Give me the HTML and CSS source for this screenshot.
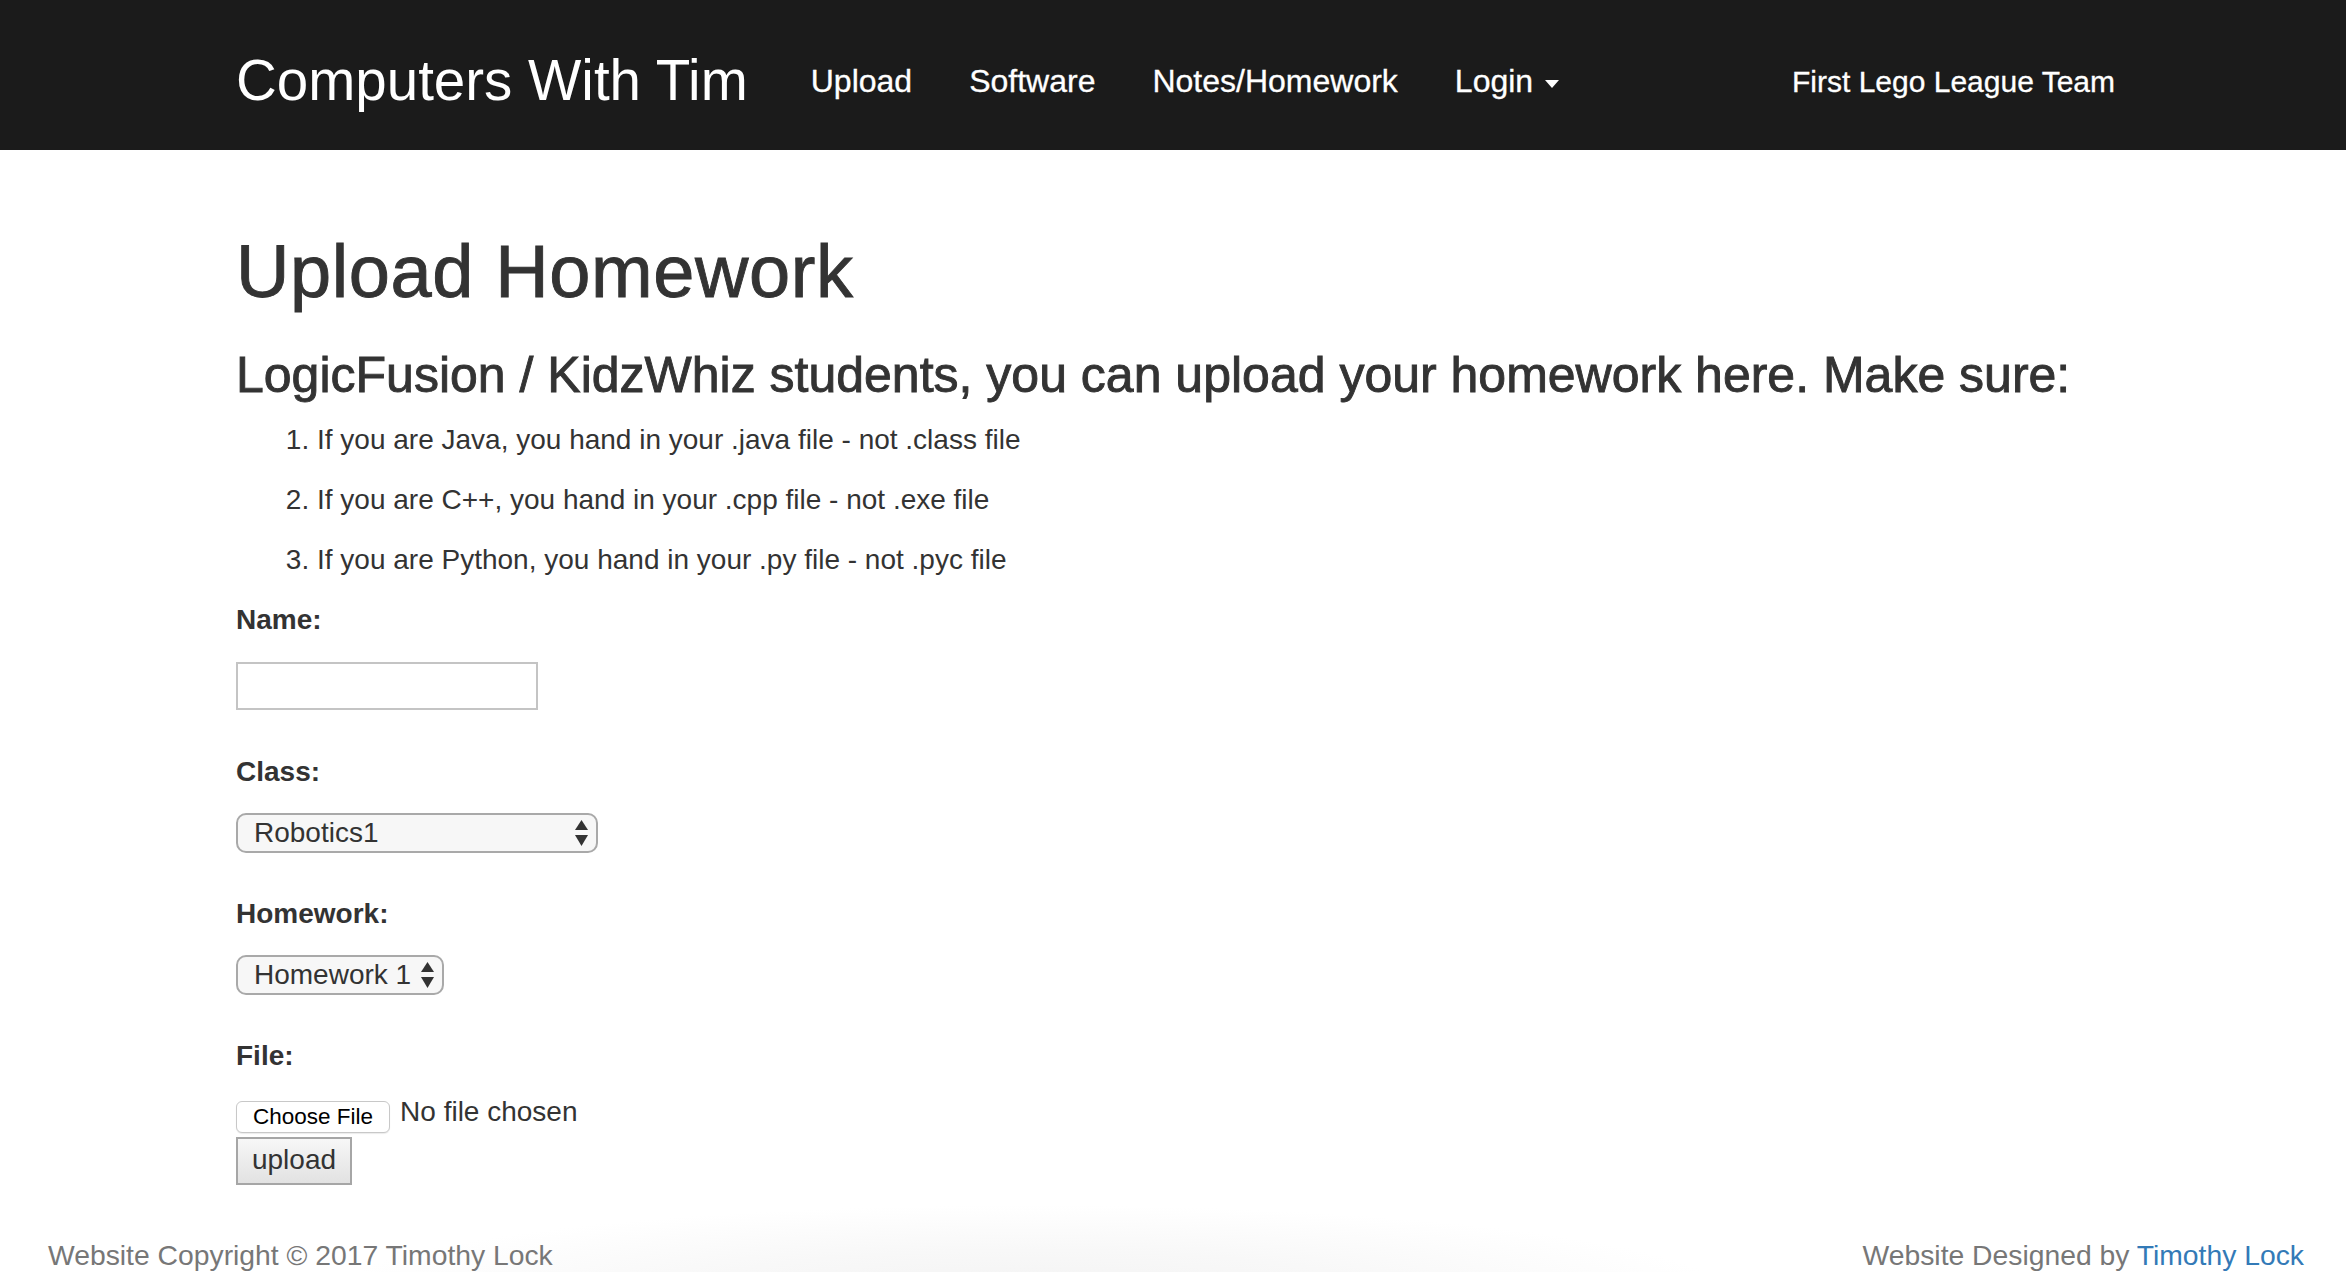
FILE: index.html
```html
<!DOCTYPE html>
<html lang="en">
<head>
<meta charset="utf-8">
<title>Upload Homework - Computers With Tim</title>
<link rel="stylesheet" href="styles.css">
</head>
<body>
<nav class="navbar">
  <div class="nav-inner">
    <a class="brand" href="#">Computers With Tim</a>
    <ul class="nav-links">
      <li><a href="#">Upload</a></li>
      <li><a href="#">Software</a></li>
      <li><a href="#">Notes/Homework</a></li>
      <li><a href="#">Login<span class="caret"></span></a></li>
    </ul>
    <ul class="nav-right">
      <li><a href="#">First Lego League Team</a></li>
    </ul>
  </div>
</nav>

<main class="container">
  <h1 class="page-title">Upload Homework</h1>
  <h3 class="page-sub">LogicFusion / KidzWhiz students, you can upload your homework here. Make sure:</h3>
  <ol class="rules">
    <li>If you are Java, you hand in your .java file - not .class file</li>
    <li>If you are C++, you hand in your .cpp file - not .exe file</li>
    <li>If you are Python, you hand in your .py file - not .pyc file</li>
  </ol>

  <form class="upload-form">
    <label class="field-label" for="name">Name:</label>
    <input class="text-input" id="name" type="text">

    <label class="field-label label-gap" for="cls">Class:</label>
    <div class="select-wrap select-wide">
      <select class="select" id="cls"><option>Robotics1</option></select>
      <svg class="select-arrows" width="13" height="26" viewBox="0 0 13 26"><polygon points="6.5,0 13,10 0,10"/><polygon points="0,15 13,15 6.5,26"/></svg>
    </div>

    <label class="field-label label-gap-sm" for="hw">Homework:</label>
    <div class="select-wrap select-narrow">
      <select class="select" id="hw"><option>Homework 1</option></select>
      <svg class="select-arrows" width="13" height="26" viewBox="0 0 13 26"><polygon points="6.5,0 13,10 0,10"/><polygon points="0,15 13,15 6.5,26"/></svg>
    </div>

    <label class="field-label label-gap-sm">File:</label>
    <div class="file-row">
      <button type="button" class="file-btn">Choose File</button>
      <span class="file-name">No file chosen</span>
    </div>
    <button type="button" class="submit-btn">upload</button>
  </form>
</main>

<footer class="site-footer">
  <span class="copyright">Website Copyright © 2017 Timothy Lock</span>
  <span class="designed">Website Designed by <a href="#">Timothy Lock</a></span>
</footer>
</body>
</html>
```

FILE: styles.css
```css
* { box-sizing: border-box; }

html, body {
  margin: 0;
  padding: 0;
  background: #fff;
}

body {
  font-family: "Liberation Sans", Arial, Helvetica, sans-serif;
  font-size: 28px;
  line-height: 40px;
  color: #333;
}

a { text-decoration: none; }

/* ---------- navbar ---------- */
.navbar {
  background: #1b1b1b;
  height: 150px;
}

.nav-inner {
  width: 1874px;
  margin: 0 auto;
  height: 150px;
  display: flex;
  align-items: flex-start;
}

.brand {
  color: #fff;
  font-size: 56.5px;
  line-height: 56px;
  padding-top: 53px;
  margin-right: 33px;
  white-space: nowrap;
}

.nav-links,
.nav-right {
  list-style: none;
  margin: 0;
  padding: 0;
  display: flex;
}

.nav-links a,
.nav-right a {
  display: block;
  color: #fff;
  font-size: 32px;
  line-height: 32px;
  padding: 65px 29px 0 30px;
  white-space: nowrap;
  -webkit-text-stroke: 0.3px #fff;
}

.nav-links li + li a {
  padding-left: 28px;
}

.nav-right {
  margin-left: auto;
  margin-right: -5px;
}

.nav-right a {
  font-size: 30px;
  padding: 66px 0 0;
}

.caret {
  display: inline-block;
  width: 0;
  height: 0;
  margin-left: 12px;
  vertical-align: middle;
  border-top: 8px solid #fff;
  border-left: 7px solid transparent;
  border-right: 7px solid transparent;
}

/* ---------- main ---------- */
.container {
  width: 1874px;
  margin: 0 auto;
  display: flex;
  flex-direction: column;
  align-items: flex-start;
}

.page-title {
  margin: 81px 0 0;
  font-size: 74px;
  line-height: 1.1;
  font-weight: normal;
  letter-spacing: 0.6px;
  color: #333;
  -webkit-text-stroke: 0.9px #333;
}

.page-sub {
  margin: 36px 0 0;
  font-size: 50px;
  line-height: 1.1;
  font-weight: normal;
  color: #333;
  white-space: nowrap;
  -webkit-text-stroke: 0.9px #333;
}

.rules {
  margin: 17px 0 0;
  padding-left: 81px;
  display: flex;
  flex-direction: column;
  gap: 20px;
}

.rules li {
  line-height: 40px;
}

/* ---------- form ---------- */
.upload-form {
  margin-top: 20px;
  display: flex;
  flex-direction: column;
  align-items: flex-start;
}

.field-label {
  font-weight: bold;
  line-height: 40px;
}

.label-gap { margin-top: 42px; }
.label-gap-sm { margin-top: 41px; }

.text-input {
  margin: 22px 0 0;
  width: 302px;
  height: 48px;
  border: 2px solid #c4c4c4;
  border-radius: 0;
  background: #fff;
  font: inherit;
  padding: 0 8px;
}

.select-wrap {
  position: relative;
  margin-top: 21px;
  height: 40px;
}

.select-wide { width: 362px; }
.select-narrow { width: 208px; }

.select {
  -webkit-appearance: none;
  appearance: none;
  width: 100%;
  height: 40px;
  margin: 0;
  border: 2px solid #a9a9a9;
  border-radius: 10px;
  background: #f7f7f7;
  color: #333;
  font-family: inherit;
  font-size: 28px;
  line-height: 36px;
  padding: 0 0 0 16px;
}

.select-arrows {
  position: absolute;
  right: 10px;
  top: 7px;
  fill: #333;
  pointer-events: none;
}

.file-row {
  margin-top: 22px;
  display: flex;
  align-items: flex-start;
}

.file-btn {
  margin: 3px 0 0;
  height: 32px;
  padding: 0 16px;
  border: 1px solid #c8c8c8;
  border-radius: 6px;
  background: #fff;
  box-shadow: 0 1px 1px rgba(0, 0, 0, 0.08);
  font-family: inherit;
  font-size: 22.5px;
  line-height: 30px;
  color: #000;
}

.file-name {
  margin-left: 10px;
  font-size: 28px;
  line-height: 28px;
  color: #333;
}

.submit-btn {
  margin-top: 4px;
  width: 116px;
  height: 48px;
  padding: 0 0 3px;
  border: 2px solid #a6a6a6;
  border-radius: 0;
  background: linear-gradient(#f7f7f7, #e2e2e2);
  font-family: inherit;
  font-size: 28px;
  line-height: 40px;
  color: #333;
}

/* ---------- footer ---------- */
.site-footer {
  margin-top: 15px;
  padding: 35px 42px 40px 48px;
  display: flex;
  justify-content: space-between;
  color: #777;
  font-size: 28.3px;
  line-height: 40px;
  background: radial-gradient(ellipse 700px 90px at 1030px 95px, #f3f3f3 0%, #f8f8f8 50%, rgba(255, 255, 255, 0) 100%);
}

.designed a {
  color: #337ab7;
}
```
